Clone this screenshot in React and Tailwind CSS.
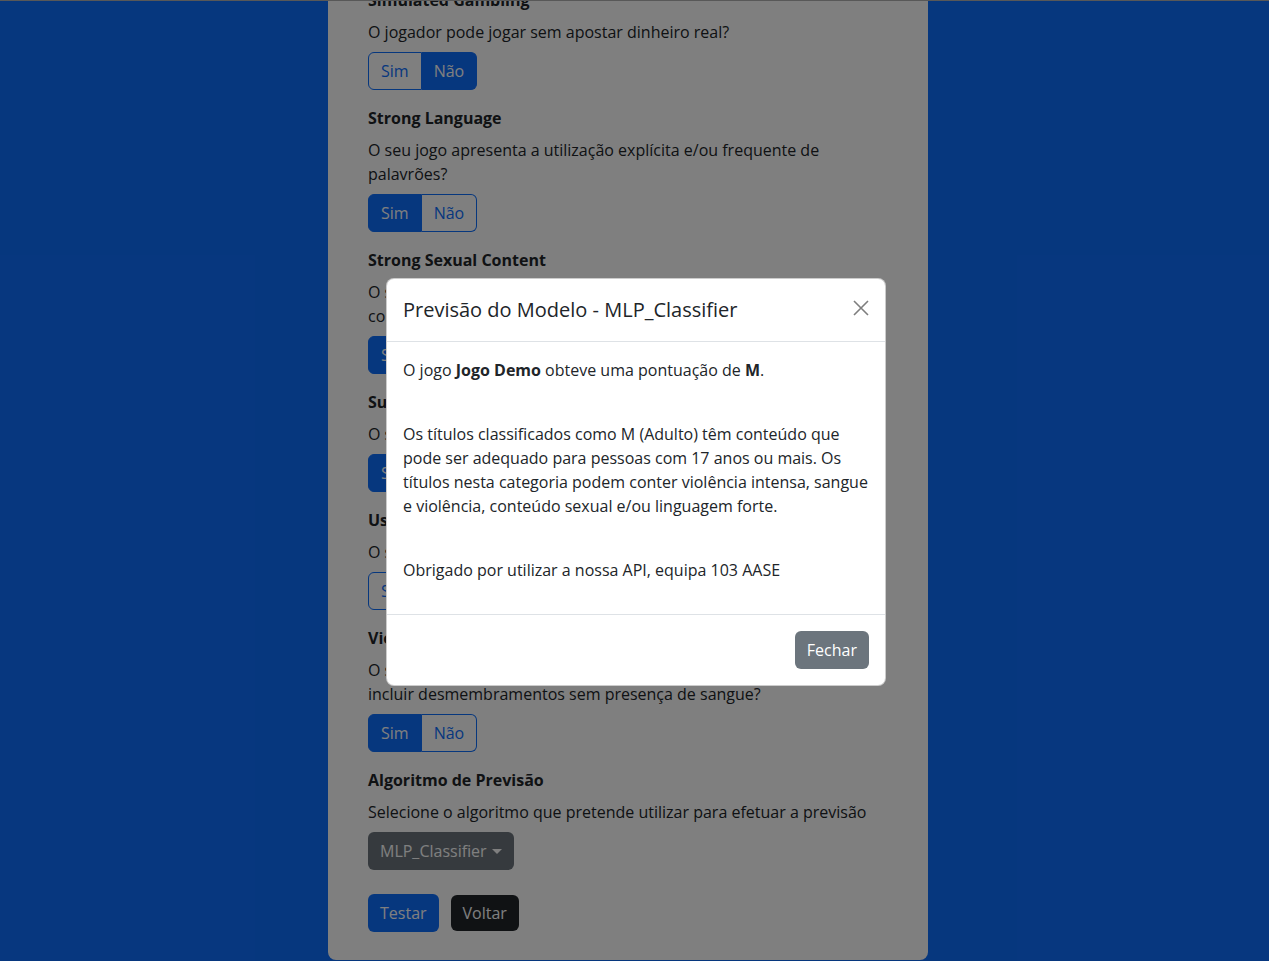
import React from 'react';

const Toggle = ({ value }) => (
  <div className="inline-flex mb-4">
    <button className={`h-[38px] px-3 rounded-l-md border border-[#0d6efd] ${value === 'sim' ? 'bg-[#0d6efd] text-white' : 'bg-white text-[#0d6efd]'}`}>Sim</button>
    <button className={`h-[38px] px-3 rounded-r-md border border-l-0 border-[#0d6efd] ${value === 'nao' ? 'bg-[#0d6efd] text-white' : 'bg-white text-[#0d6efd]'}`}>Não</button>
  </div>
);

const Question = ({ title, text, value }) => (
  <div>
    <div className="font-bold mb-2">{title}</div>
    <p className="mb-2">{text}</p>
    <Toggle value={value} />
  </div>
);

const questions = [
  { title: 'Simulated Gambling', text: 'O jogador pode jogar sem apostar dinheiro real?', value: 'nao' },
  { title: 'Strong Language', text: 'O seu jogo apresenta a utilização explícita e/ou frequente de palavrões?', value: 'sim' },
  { title: 'Strong Sexual Content', text: 'O seu jogo apresenta referências ou representações explícitas de comportamento sexual, podendo incluir nudez?', value: 'sim' },
  { title: 'Suggestive Themes', text: 'O seu jogo contém temas sugestivos ligeiros?', value: 'sim' },
  { title: 'Use of Drugs and Alcohol', text: 'O seu jogo mostra o consumo de drogas ilegais?', value: 'nao' },
  { title: 'Violence', text: 'O seu jogo contém cenas de violência intensa e realista, que podem incluir desmembramentos sem presença de sangue?', value: 'sim' },
];

export default function App() {
  return (
    <div className="relative h-[961px] overflow-hidden bg-[#0d6efd] font-['Open_Sans',sans-serif] text-base leading-6 text-[#212529]">
      <div className="ml-[328px] w-[600px] -mt-3 bg-white rounded-b-lg px-10 pb-7">
        {questions.map(q => <Question key={q.title} {...q} />)}
        <div className="font-bold mb-2">Algoritmo de Previsão</div>
        <p className="mb-2">Selecione o algoritmo que pretende utilizar para efetuar a previsão</p>
        <button className="h-[38px] px-3 rounded-md bg-[#6c757d] text-white inline-flex items-center">
          MLP_Classifier
          <span className="ml-[5px] mt-[1px] border-x-[5px] border-x-transparent border-t-[5px] border-t-white" />
        </button>
        <div className="flex gap-3 mt-6 items-center">
          <button className="h-[38px] px-3 rounded-md bg-[#0d6efd] text-white">Testar</button>
          <button className="h-[36px] px-3 rounded-md bg-[#212529] text-white">Voltar</button>
        </div>
      </div>

      <div className="absolute inset-0 bg-black/50">
        <div className="h-px w-full bg-[#585858]" />
      </div>

      <div className="absolute left-[386px] top-[278px] w-[500px] bg-white rounded-lg border border-black/20">
        <div className="flex items-center justify-between px-4 py-4 border-b border-[#dee2e6]">
          <h5 className="text-xl leading-[30px] font-medium">Previsão do Modelo - MLP_Classifier</h5>
          <button className="w-4 h-4 -mt-1 opacity-50">
            <svg viewBox="0 0 16 16" className="w-4 h-4">
              <path d="M1 1L15 15M15 1L1 15" stroke="#000" strokeWidth="1.6" />
            </svg>
          </button>
        </div>
        <div className="p-4">
          <p className="mb-4">O jogo <b>Jogo Demo</b> obteve uma pontuação de <b>M</b>.</p>
          <br />
          <p className="mb-4">Os títulos classificados como M (Adulto) têm conteúdo que pode ser adequado para pessoas com 17 anos ou mais. Os títulos nesta categoria podem conter violência intensa, sangue e violência, conteúdo sexual e/ou linguagem forte.</p>
          <br />
          <p className="mb-4">Obrigado por utilizar a nossa API, equipa 103 AASE</p>
        </div>
        <div className="flex justify-end p-4 border-t border-[#dee2e6]">
          <button className="h-[38px] px-3 rounded-md bg-[#6c757d] text-white">Fechar</button>
        </div>
      </div>
    </div>
  );
}
